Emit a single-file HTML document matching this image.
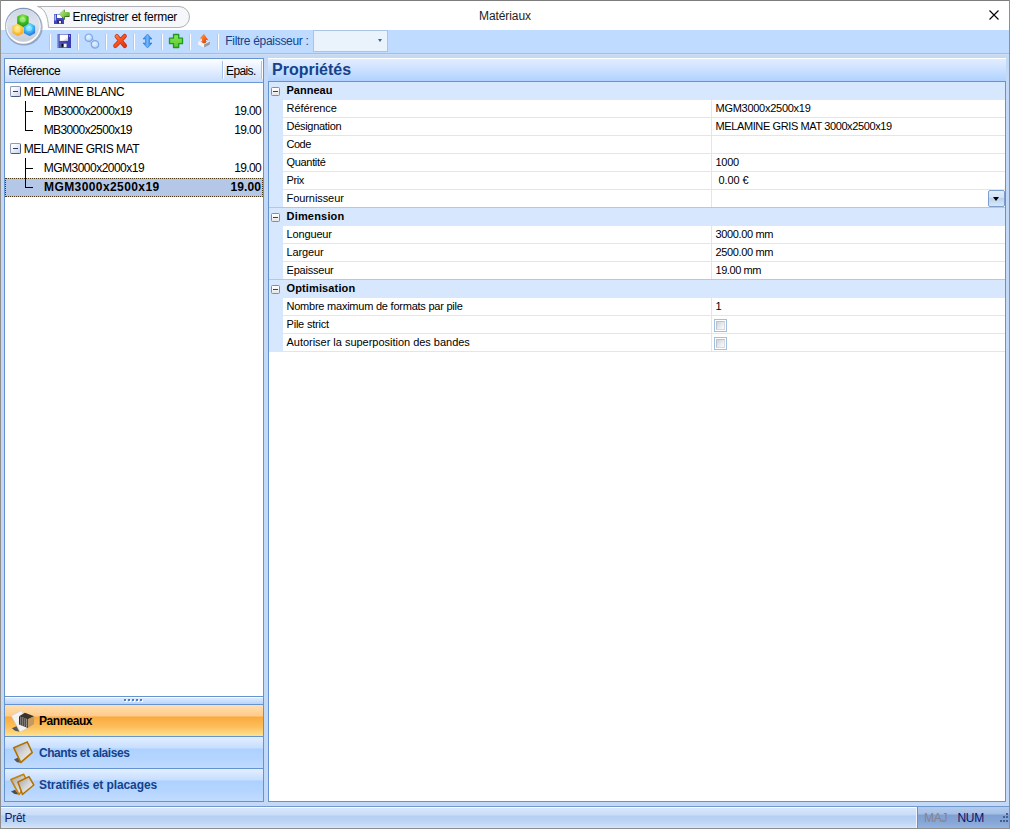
<!DOCTYPE html>
<html lang="fr">
<head>
<meta charset="utf-8">
<title>Matériaux</title>
<style>
*{box-sizing:border-box;margin:0;padding:0}
html,body{width:1010px;height:829px;overflow:hidden;background:#fff}
body{position:relative;font-family:"Liberation Sans",sans-serif;font-size:12px;color:#000}
.abs{position:absolute}
#win{position:absolute;left:0;top:0;width:1010px;height:829px;background:#bfdbff;overflow:hidden}
#bT{left:0;top:0;width:1010px;height:1px;background:#7d7d7d}
#bL{left:0;top:0;width:1px;height:829px;background:#8e8e8e}
#bR{left:1009px;top:0;width:1px;height:829px;background:#8e8e8e}
#bB{left:0;top:828px;width:1010px;height:1px;background:#8e8e8e}
#title{left:1px;top:1px;width:1008px;height:29px;background:#fff}
#ttext{left:0;top:8px;width:1010px;text-align:center;font-size:12px;line-height:16px;color:#1e1e1e;letter-spacing:-0.1px}
#tbline{left:1px;top:53px;width:1008px;height:1px;background:#9fc0ea}
#tbsub{left:1px;top:54px;width:1008px;height:752px;background:#c3d9f6;border-top:1px solid #cfdef2}
.sep{position:absolute;top:34px;width:2px;height:16px;background:linear-gradient(90deg,#a9cdfb 0 1px,#fff 1px 2px)}
.ico{position:absolute;top:33px;width:16px;height:16px}
#flt{left:225.3px;top:33px;line-height:16px;color:#15428b;letter-spacing:-0.3px;white-space:nowrap}
#combo{left:313px;top:30px;width:75px;height:22px;background:#eaf2fb;border:1px solid #abc4e4}
#combo i{position:absolute;left:64px;top:8px;width:0;height:0;border-left:2.5px solid transparent;border-right:2.5px solid transparent;border-top:3px solid #3b639c}
/* tab */
#tab{left:36px;top:5px;width:156px;height:24px}
#tabtxt{left:72.5px;top:9px;line-height:16px;white-space:nowrap;letter-spacing:-0.26px;color:#000}
/* left panel */
#lp{left:4px;top:58px;width:260px;height:744px;border:1px solid #6593cf;background:#fff}
#lhead{left:0;top:0;width:258px;height:23px;background:linear-gradient(#fdfeff,#e6f0ff 45%,#c9ddfc);}
#lheadb{left:0;top:23px;width:258px;height:1px;background:#6c98d4}
.hsep{position:absolute;top:2px;width:2px;height:18px;background:linear-gradient(90deg,#a5c3ec 0 1px,#fff 1px 2px)}
.trow{position:absolute;left:0;width:258px;height:19px;line-height:19px;white-space:nowrap;letter-spacing:-0.45px}
.trow .n{position:absolute;top:0}
.trow .v{position:absolute;right:2px;top:0;text-align:right;letter-spacing:-0.65px}
.pm{position:absolute;left:6px;width:11px;height:11px;border:1px solid #8f9ab3;border-right-color:#46587c;border-bottom-color:#46587c;border-radius:2px;background:linear-gradient(135deg,#fff 15%,#ccd3ec)}
.pm:after{content:"";position:absolute;left:2px;top:4px;width:5px;height:1px;background:#2b3f60}
.tl{position:absolute;background:#000}
#sel{left:0;top:119px;width:258px;height:19px;background:#b4c7e7;border:1px dotted #4b3818}
#split{left:0;top:637px;width:258px;height:9px;border-top:1px solid #6593cf;border-bottom:1px solid #6593cf;background:linear-gradient(#fff 0 1px,#dbe9ff 1px,#b7d4fb 7px)}
.nb{position:absolute;left:0;width:258px;height:32px;border-bottom:1px solid #6593cf;font-weight:bold;line-height:16px;white-space:nowrap}
.nb span{position:absolute;left:34px;top:8px;letter-spacing:-0.45px}
.nb svg{position:absolute;left:5px;top:4px}
.nbo{background:linear-gradient(#ffdfb0 0,#ffcb8c 11px,#fbaa3c 12px,#fcbf5c 22px,#fee290 31px)}
.nbb{background:linear-gradient(#e3efff 0,#c6deff 11px,#add1ff 12px,#b5d5ff 22px,#c1dbff 31px);color:#15428b}
/* right panel */
#rhead{left:268px;top:58px;width:738px;height:23px;background:linear-gradient(#fff 0 1px,#e1edff 1px,#cde2ff 11px,#b0d2ff 23px)}
#rtitle{left:272px;top:60px;font-size:16px;font-weight:bold;line-height:20px;color:#15428b;white-space:nowrap}
#grid{left:268px;top:81px;width:738px;height:721px;border:1px solid #6593cf;background:#fff;font-size:11px}
#gstrip{left:0;top:0;width:14px;height:270px;background:#d6e7fe}
.cat{position:absolute;left:0;width:736px;height:18px;background:#d6e7fe;font-weight:bold;line-height:18px}
.cat b{position:absolute;left:17.5px;top:-1px;font-weight:bold}
.cat .pm{left:2px;top:5px;width:9px;height:9px;border:1px solid #8c8c8c;border-radius:1.5px;background:linear-gradient(#fff,#e6e6e6)}
.cat .pm:after{left:1px;top:3px;background:#2b3f78}
.pr{position:absolute;left:14px;width:722px;height:18px;border-bottom:1px solid #d6e7fe;line-height:17px;white-space:nowrap}
.pr .k{position:absolute;left:3.5px;top:0}
.pr .val{position:absolute;left:432.5px;top:0}
#vsep{left:442px;width:1px;background:#d6e7fe}
.cb{position:absolute;left:431px;top:3px;width:13px;height:13px;border:1px solid #a4bde2;background:#fff}
.cb:after{content:"";position:absolute;left:1px;top:1px;width:7px;height:7px;background:linear-gradient(135deg,#cfd3da,#f7f7f7 85%);border:1px solid #bcc3cd;border-right-color:#d5d9df;border-bottom-color:#d5d9df}
#dd{left:719px;top:108px;width:17px;height:17px;border:1px solid #7c9fcf;border-radius:2px;background:linear-gradient(#e3edf9,#d2e1f4 45%,#bcd2ec 50%,#d8e8f8)}
#dd:after{content:"";position:absolute;left:4px;top:6px;border-left:3.5px solid transparent;border-right:3.5px solid transparent;border-top:4px solid #000}
/* status */
#sb{left:1px;top:806px;width:1008px;height:22px;border-top:1px solid #6f98d1;background:linear-gradient(#fff 0 1px,#d7e6fa 1px,#c9ddf8 8px,#b3cff3 9px,#c0d7f5 16px,#d6e5f8 21px)}
#sbr{left:917px;top:807px;width:92px;height:21px;background:linear-gradient(#b4cbea 0,#a4bfe6 7px,#7f9fd2 8px,#86a6d7 15px,#95b3df 21px);border-left:1px solid #6d8fc4}
#sbw{left:916px;top:807px;width:1px;height:21px;background:#f2f7fd}
.st{position:absolute;top:810px;line-height:16px;white-space:nowrap;letter-spacing:-0.3px}
</style>
</head>
<body>
<div id="win">
  <div id="title" class="abs"></div>
  <div id="ttext" class="abs">Matériaux</div>
  <!-- close X -->
  <svg class="abs" style="left:988px;top:9px" width="12" height="12" viewBox="0 0 12 12"><path d="M1.5 1.5 L10.5 10.5 M10.5 1.5 L1.5 10.5" stroke="#000" stroke-width="1.1" fill="none"/></svg>

  <!-- tab -->
  <svg id="tab" class="abs" viewBox="0 0 156 24">
    <path d="M1.500 1.500 H143 A10.500 10.500 0 0 1 143 22.500 H12.500 C12 11 8.500 3 1.500 1.500 Z" fill="#f5f7fb" stroke="#b2b2b6" stroke-width="1"/>
  </svg>
  <!-- tab icon -->
  <svg class="abs" style="left:54px;top:8px" width="16" height="16" viewBox="0 0 16 16">
    <defs><linearGradient id="tg" x1="0" y1="0" x2="1" y2="1"><stop offset="0" stop-color="#c8ecb0"/><stop offset=".5" stop-color="#86d24e"/><stop offset="1" stop-color="#4e9a2c"/></linearGradient></defs>
    <rect x="0" y="6" width="10" height="10" fill="#4545bd"/>
    <rect x=".5" y="6.500" width="1.500" height="6" fill="#9cc0f2"/>
    <rect x="3" y="6.500" width="5" height="3.500" fill="#fff"/>
    <rect x="3" y="12.300" width="5" height="3" fill="#26305c"/>
    <rect x="5" y="13" width="2" height="2.300" fill="#eef6ee"/>
    <path d="M5.600 6.200 L10.700 1.600 V4.600 H15.400 V9 H10.900 V12 Z" fill="#17240f"/>
    <path d="M5 5.700 L10.500 1 V4 H15 V8.500 H10.500 V11.500 Z" fill="url(#tg)"/>
  </svg>
  <div id="tabtxt" class="abs">Enregistrer et fermer</div>

  <!-- orb -->
  <svg class="abs" style="left:3px;top:6px" width="42" height="42" viewBox="0 0 42 42">
    <defs>
      <linearGradient id="og" x1="0" y1="0" x2="0" y2="1"><stop offset="0" stop-color="#cfd7e5"/><stop offset=".45" stop-color="#dde3ed"/><stop offset="1" stop-color="#c6ccd8"/></linearGradient>
      <linearGradient id="or" x1="0" y1="0" x2="0" y2="1"><stop offset="0" stop-color="#7d92b5"/><stop offset=".55" stop-color="#a9b6cc"/><stop offset="1" stop-color="#9aa6ba"/></linearGradient>
      <linearGradient id="ow" x1="0" y1="0" x2="0" y2="1"><stop offset="0" stop-color="#e6ebf3"/><stop offset=".5" stop-color="#f3f6fa"/><stop offset="1" stop-color="#ffffff"/></linearGradient>
      <radialGradient id="cg" cx=".5" cy=".25" r=".8"><stop offset="0" stop-color="#9af04c"/><stop offset=".5" stop-color="#3fc11e"/><stop offset="1" stop-color="#178a14"/></radialGradient>
      <radialGradient id="cy" cx=".45" cy=".3" r=".8"><stop offset="0" stop-color="#ffe978"/><stop offset=".5" stop-color="#ffc93a"/><stop offset="1" stop-color="#f29a1e"/></radialGradient>
      <radialGradient id="cb" cx=".45" cy=".3" r=".8"><stop offset="0" stop-color="#7ff0ff"/><stop offset=".5" stop-color="#3cb9f6"/><stop offset="1" stop-color="#2458d2"/></radialGradient>
    </defs>
    <ellipse cx="21" cy="21.300" rx="18.700" ry="18.300" fill="rgba(70,80,100,.38)"/>
    <circle cx="20.400" cy="20.100" r="18.400" fill="url(#or)"/>
    <circle cx="20.400" cy="20.300" r="17.400" fill="url(#ow)"/>
    <circle cx="20.300" cy="19.400" r="16.300" fill="url(#og)"/>
    <path d="M14.200 11.200 Q14.200 10.300 15 9.900 L19 8.300 Q19.900 8 20.800 8.400 L24.800 10 Q25.600 10.400 25.600 11.300 V18.300 L19.900 21.400 L14.200 18.300 Z" fill="url(#cg)"/>
    <path d="M9.400 20.600 Q9.400 19.800 10.200 19.400 L14.400 17.700 L20.300 20.900 V26.600 Q20.300 27.300 19.600 27.700 L15.500 29.700 Q14.800 30 14.100 29.700 L10.100 27.600 Q9.400 27.200 9.400 26.500 Z" fill="url(#cy)"/>
    <path d="M20.900 20.700 L26.200 17.200 Q26.900 16.900 27.600 17.300 L31.500 19.500 Q32.100 19.900 32.100 20.600 V26.300 Q32.100 27 31.500 27.400 L27.400 29.700 Q26.700 30 26 29.700 L21.600 27.500 Q20.900 27.100 20.900 26.400 Z" fill="url(#cb)"/>
    <ellipse cx="19.600" cy="13.800" rx="3.200" ry="2.600" fill="rgba(255,255,255,.35)"/><ellipse cx="14.300" cy="23.500" rx="3" ry="3.200" fill="rgba(255,255,255,.28)"/><ellipse cx="26" cy="22.500" rx="3" ry="2.600" fill="rgba(255,255,255,.3)"/>
  </svg>

  <!-- toolbar -->
  <div id="tbline" class="abs"></div>
  <div id="tbsub" class="abs"></div>
  <div class="sep" style="left:49px"></div>
  <div class="sep" style="left:77px"></div>
  <div class="sep" style="left:105px"></div>
  <div class="sep" style="left:133px"></div>
  <div class="sep" style="left:161px"></div>
  <div class="sep" style="left:189px"></div>
  <div class="sep" style="left:217px"></div>
  <!-- save -->
  <svg class="ico" style="left:56px" viewBox="0 0 16 16">
    <defs><linearGradient id="sv" x1="0" y1="0" x2="1" y2="0"><stop offset="0" stop-color="#8fb4ea"/><stop offset=".18" stop-color="#4a4cc0"/><stop offset="1" stop-color="#3a38ae"/></linearGradient>
    <linearGradient id="sl" x1="0" y1="0" x2="1" y2="1"><stop offset="0" stop-color="#fff"/><stop offset=".62" stop-color="#fff"/><stop offset=".7" stop-color="#f3ecd2"/><stop offset="1" stop-color="#a9c6f2"/></linearGradient></defs>
    <rect x="1" y="1" width="14" height="14" fill="url(#sv)"/>
    <rect x="3.700" y="1.600" width="8.300" height="6.300" fill="url(#sl)"/>
    <rect x="3.700" y="10.200" width="7.300" height="4.300" fill="#55609a"/>
    <rect x="5.500" y="10.800" width="2.200" height="3" fill="#0a0a14"/>
    <rect x="7.700" y="10.800" width="2.800" height="3.400" fill="#f4f7ff"/>
    <rect x="13" y="2" width="1" height="2" fill="#8d8de0"/>
  </svg>
  <!-- link (disabled) -->
  <svg class="ico" style="left:84px" viewBox="0 0 16 16">
    <defs><radialGradient id="lk" cx=".4" cy=".35" r=".7"><stop offset="0" stop-color="#e9f3ff"/><stop offset=".7" stop-color="#c4dcfb"/><stop offset="1" stop-color="#8fb5ee"/></radialGradient></defs>
    <line x1="5" y1="5" x2="11" y2="11.500" stroke="#9dbff0" stroke-width="5"/>
    <line x1="5" y1="5" x2="11" y2="11.500" stroke="#cfe3fb" stroke-width="2.600"/>
    <circle cx="4.800" cy="4.700" r="3.700" fill="url(#lk)" stroke="#7ba7ea" stroke-width="1.200"/>
    <circle cx="11" cy="11.400" r="3.700" fill="url(#lk)" stroke="#7ba7ea" stroke-width="1.200"/>
  </svg>
  <!-- delete X -->
  <svg class="ico" style="left:112px" viewBox="0 0 16 16">
    <defs><linearGradient id="rx" x1="0" y1="0" x2="1" y2="1"><stop offset="0" stop-color="#ff7a48"/><stop offset=".5" stop-color="#f5501e"/><stop offset="1" stop-color="#e2360c"/></linearGradient></defs>
    <path d="M4.800 3.400 L12.800 12.800 M12.600 3.200 L3.400 12.800" stroke="#d02a0c" stroke-width="4.400" stroke-linecap="round" fill="none"/>
    <path d="M4.800 3.400 L12.800 12.800 M12.600 3.200 L3.400 12.800" stroke="url(#rx)" stroke-width="3" stroke-linecap="round" fill="none"/>
  </svg>
  <!-- arrows -->
  <svg class="ico" style="left:140px" viewBox="0 0 16 16">
    <defs><linearGradient id="ba" x1="0" y1="0" x2="1" y2="0"><stop offset="0" stop-color="#1a84f2"/><stop offset=".5" stop-color="#74b4f4"/><stop offset="1" stop-color="#1a6fd8"/></linearGradient></defs>
    <path d="M7.500 1 L12 6 H9.500 V10 H12 L7.500 15 L3 10 H5.500 V6 H3 Z" fill="url(#ba)" stroke="#1c7ae6" stroke-width=".6" stroke-linejoin="round"/>
  </svg>
  <!-- plus -->
  <svg class="ico" style="left:168px" viewBox="0 0 16 16">
    <defs><linearGradient id="gp" x1="0" y1="0" x2="0" y2="1"><stop offset="0" stop-color="#8ae65a"/><stop offset="1" stop-color="#58c82c"/></linearGradient></defs>
    <path d="M5.500 1.500 H10.700 V5.200 H14.500 V10.700 H10.700 V14.500 H5.500 V10.700 H1.500 V5.200 H5.500 Z" fill="url(#gp)" stroke="#1f9a1a" stroke-width="1.300" stroke-linejoin="round"/>
  </svg>
  <!-- export -->
  <svg class="ico" style="left:196px" viewBox="0 0 16 16">
    <defs><linearGradient id="ex" x1="0" y1="0" x2="1" y2="1"><stop offset="0" stop-color="#ffa640"/><stop offset=".55" stop-color="#f9641e"/><stop offset="1" stop-color="#d81808"/></linearGradient></defs>
    <path d="M2.100 8.400 L8 5.500 L13.900 8.600 L8.100 11.500 Z" fill="#e6f2f8"/>
    <path d="M4.500 8.500 L8 6.800 L11.500 8.600 L8.100 10.300 Z" fill="#8fa9bf"/>
    <path d="M2.100 8.400 L8.100 11.500 V14.600 L2.100 11.500 Z" fill="#f6f6f6"/>
    <path d="M8.100 11.500 L13.900 8.600 V11.600 L8.100 14.600 Z" fill="#9b9b9b"/>
    <path d="M7.900 .7 L12.400 7.400 L10 6.800 V9.400 L8 10.400 L6 9.400 V5.700 L3.900 5.300 Z" fill="url(#ex)"/>
  </svg>
  <div id="flt" class="abs">Filtre épaisseur :</div>
  <div id="combo" class="abs"><i></i></div>

  <!-- left panel -->
  <div id="lp" class="abs">
    <div id="lhead" class="abs"></div>
    <div id="lheadb" class="abs"></div>
    <div class="hsep" style="left:217px"></div>
    <div class="hsep" style="left:256px"></div>
    <div class="abs" style="left:3.500px;top:4px;line-height:16px;letter-spacing:-0.4px">Référence</div>
    <div class="abs" style="left:221px;top:4px;line-height:16px;letter-spacing:-0.6px">Epais.</div>

    <div id="sel" class="abs"></div>
    <div class="trow" style="top:24px;letter-spacing:-0.38px"><i class="pm" style="left:5px;top:3px"></i><span class="n" style="left:18.700px">MELAMINE BLANC</span></div>
    <div class="trow" style="top:43px"><span class="n" style="left:38.700px;letter-spacing:-0.62px">MB3000x2000x19</span><span class="v">19.00</span></div>
    <div class="trow" style="top:62px"><span class="n" style="left:38.700px;letter-spacing:-0.62px">MB3000x2500x19</span><span class="v">19.00</span></div>
    <div class="trow" style="top:81px;letter-spacing:-0.45px"><i class="pm" style="left:5px;top:3px"></i><span class="n" style="left:18.700px">MELAMINE GRIS MAT</span></div>
    <div class="trow" style="top:100px"><span class="n" style="left:38.700px;letter-spacing:-0.51px">MGM3000x2000x19</span><span class="v">19.00</span></div>
    <div class="trow" style="top:119px;font-weight:bold"><span class="n" style="left:39px;letter-spacing:0.41px">MGM3000x2500x19</span><span class="v" style="letter-spacing:0.1px">19.00</span></div>
    <!-- tree lines -->
    <div class="tl" style="left:20px;top:42px;width:1px;height:30px"></div>
    <div class="tl" style="left:20px;top:52px;width:8px;height:1px"></div>
    <div class="tl" style="left:20px;top:71px;width:8px;height:1px"></div>
    <div class="tl" style="left:20px;top:99px;width:1px;height:30px"></div>
    <div class="tl" style="left:20px;top:109px;width:8px;height:1px"></div>
    <div class="tl" style="left:20px;top:128px;width:8px;height:1px"></div>

    <div id="split" class="abs">
      <svg class="abs" style="left:118px;top:1px" width="24" height="5" viewBox="0 0 24 5"><rect x="2" y="2" width="2" height="2" fill="#fff"/><rect x="1" y="1" width="2" height="2" fill="#4f7ec9"/><rect x="6" y="2" width="2" height="2" fill="#fff"/><rect x="5" y="1" width="2" height="2" fill="#4f7ec9"/><rect x="10" y="2" width="2" height="2" fill="#fff"/><rect x="9" y="1" width="2" height="2" fill="#4f7ec9"/><rect x="14" y="2" width="2" height="2" fill="#fff"/><rect x="13" y="1" width="2" height="2" fill="#4f7ec9"/><rect x="18" y="2" width="2" height="2" fill="#fff"/><rect x="17" y="1" width="2" height="2" fill="#4f7ec9"/></svg>
    </div>
    <div class="nb nbo" style="top:646px">
      <svg width="26" height="24" viewBox="0 0 26 24">
        <defs><linearGradient id="fg" x1="0" y1="0" x2="1" y2="1"><stop offset="0" stop-color="#9c9c9c"/><stop offset=".5" stop-color="#d4d4d4"/><stop offset="1" stop-color="#fbfbfb"/></linearGradient></defs>
        <path d="M1.900 19.300 L6.500 17.300 L9.500 22.800 L5 21.800 Z" fill="#555"/>
        <path d="M1.300 7 L11.400 1.500 L20.200 17.500 L10.200 23 Z" fill="#f3f3f3" stroke="#c9c9c9" stroke-width=".5"/>
        <path d="M9 7.200 L14.900 3.700 L24.100 7.200 L17.900 10.200 Z" fill="#3a342c"/>
        <path d="M17.900 10.200 L24.100 7.200 V15 L17.900 19 Z" fill="#c39a64"/>
        <path d="M9 7.200 L17.900 10.200 V19 L9 15.500 Z" fill="#2e2e2e"/>
        <path d="M10.800 8 V16 M12.800 8.700 V16.800 M14.800 9.400 V17.600 M16.600 10 V18.300" stroke="#a8a49c" stroke-width=".9"/>
      </svg>
      <span style="color:#000">Panneaux</span>
    </div>
    <div class="nb nbb" style="top:678px">
      <svg width="26" height="24" viewBox="0 0 26 24">
        <path d="M4 18.500 L8 16.500 L11.200 21.800 L7 21.200 Z" fill="#555"/>
        <path d="M3.700 6.700 L17.300 1 L22.200 11.500 L10.800 21.500 Z" fill="url(#fg)" stroke="#c4820c" stroke-width="1.700" stroke-linejoin="round"/>
        <path d="M3.700 6.700 L17.300 1 L22.200 11.500 L10.800 21.500 Z" fill="none" stroke="#7a4e08" stroke-width=".4" stroke-linejoin="round"/>
      </svg>
      <span>Chants et alaises</span>
    </div>
    <div class="nb nbb" style="top:710px;border-bottom:0">
      <svg width="26" height="24" viewBox="0 0 26 24">
        <path d="M1 18.500 L5 16.800 L9 21.600 L4.500 21 Z" fill="#4e4e4e"/>
        <path d="M.9 6.600 L13.700 1.300 L18 10 L9 21.400 Z" fill="url(#fg)" stroke="#c4820c" stroke-width="1.600" stroke-linejoin="round"/>
        <path d="M7.800 9 L19 3.700 L23.800 12 L12.500 21.400 Z" fill="url(#fg)" stroke="#c4820c" stroke-width="1.600" stroke-linejoin="round"/>
        <path d="M7.800 9 L19 3.700 L23.800 12 L12.500 21.400 Z" fill="none" stroke="#7a4e08" stroke-width=".4" stroke-linejoin="round"/>
      </svg>
      <span style="letter-spacing:-0.09px">Stratifiés et placages</span>
    </div>
  </div>

  <!-- right panel -->
  <div id="rhead" class="abs"></div>
  <div id="rtitle" class="abs">Propriétés</div>
  <div id="grid" class="abs">
    <div id="gstrip" class="abs"></div>
    <div class="cat" style="top:0"><i class="pm"></i><b>Panneau</b></div>
    <div class="pr" style="top:18px"><span class="k" style="letter-spacing:-0.05px">Référence</span><span class="val" style="letter-spacing:-0.27px">MGM3000x2500x19</span></div>
    <div class="pr" style="top:36px"><span class="k" style="letter-spacing:-0.29px">Désignation</span><span class="val" style="letter-spacing:-0.39px">MELAMINE GRIS MAT 3000x2500x19</span></div>
    <div class="pr" style="top:54px"><span class="k" style="letter-spacing:-0.5px">Code</span></div>
    <div class="pr" style="top:72px"><span class="k" style="letter-spacing:-0.32px">Quantité</span><span class="val" style="letter-spacing:-0.3px">1000</span></div>
    <div class="pr" style="top:90px"><span class="k" style="letter-spacing:-0.4px">Prix</span><span class="val" style="letter-spacing:-0.1px">&nbsp;0.00 €</span></div>
    <div class="pr" style="top:108px"><span class="k" style="letter-spacing:-0.07px">Fournisseur</span></div>
    <div class="cat" style="top:126px"><i class="pm"></i><b style="letter-spacing:0.19px">Dimension</b></div>
    <div class="pr" style="top:144px"><span class="k" style="letter-spacing:-0.14px">Longueur</span><span class="val" style="letter-spacing:-0.35px">3000.00 mm</span></div>
    <div class="pr" style="top:162px"><span class="k" style="letter-spacing:-0.11px">Largeur</span><span class="val" style="letter-spacing:-0.35px">2500.00 mm</span></div>
    <div class="pr" style="top:180px"><span class="k" style="letter-spacing:-0.21px">Epaisseur</span><span class="val" style="letter-spacing:-0.44px">19.00 mm</span></div>
    <div class="cat" style="top:198px"><i class="pm"></i><b style="letter-spacing:0.13px">Optimisation</b></div>
    <div class="pr" style="top:216px"><span class="k" style="letter-spacing:-0.23px">Nombre maximum de formats par pile</span><span class="val">1</span></div>
    <div class="pr" style="top:234px"><span class="k" style="letter-spacing:-0.2px">Pile strict</span><i class="cb"></i></div>
    <div class="pr" style="top:252px"><span class="k" style="letter-spacing:-0.02px">Autoriser la superposition des bandes</span><i class="cb"></i></div>
    <div id="vsep" class="abs" style="top:18px;height:108px"></div>
    <div class="abs" style="left:442px;width:1px;background:#d6e7fe;top:144px;height:54px"></div>
    <div class="abs" style="left:442px;width:1px;background:#d6e7fe;top:216px;height:54px"></div>
    <div class="abs" style="left:0;top:125px;width:736px;height:1px;background:#a9caf7"></div>
    <div class="abs" style="left:0;top:197px;width:736px;height:1px;background:#a9caf7"></div>
    <div id="dd" class="abs"></div>
  </div>

  <!-- status bar -->
  <div id="sb" class="abs"></div>
  <div id="sbw" class="abs"></div>
  <div id="sbr" class="abs"></div>
  <div class="st" style="left:4.500px;color:#15206b">Prêt</div>
  <div class="st" style="left:924px;color:#84848f">MAJ</div>
  <div class="st" style="left:957.500px;color:#10106a">NUM</div>
  <svg class="abs" style="left:999px;top:812px" width="11" height="12" viewBox="0 0 11 12"><g fill="#45608f"><rect x="7" y="1" width="2" height="2"/><rect x="4" y="4" width="2" height="2"/><rect x="7" y="4" width="2" height="2"/><rect x="1" y="8" width="2" height="2"/><rect x="4" y="8" width="2" height="2"/><rect x="7" y="8" width="2" height="2"/></g></svg>

  <div id="bT" class="abs"></div><div id="bL" class="abs"></div><div id="bR" class="abs"></div><div id="bB" class="abs"></div>
</div>
</body>
</html>
